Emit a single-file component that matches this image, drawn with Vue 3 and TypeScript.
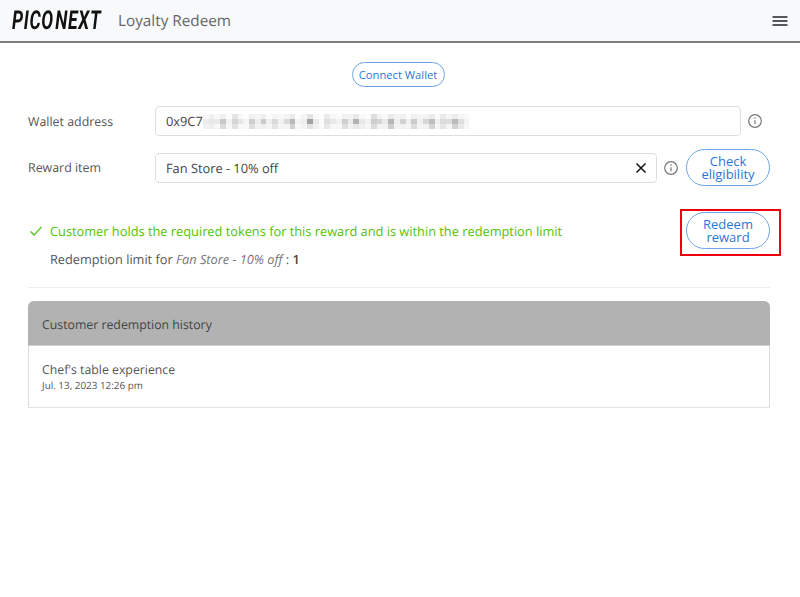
<script setup lang="ts">
const base: number[] = [
  0.18, 0.28, 0.14, 0.42, 0.12, 0.5, 0.16, 0.08, 0.46, 0.2, 0.34, 0.12, 0.36, 0.16, 0.24, 0.55, 0.1, 0.2,
  0.6, 0.16, 0.05, 0.38, 0.14, 0.1, 0.44, 0.22, 0.5, 0.18, 0.12, 0.6, 0.28, 0.16, 0.68, 0.2, 0.3, 0.12,
  0.48, 0.18, 0.26, 0.5, 0.14, 0.42, 0.22, 0.52, 0.3, 0.14
]
const rowFactor: number[] = [0.35, 1, 0.55]
const blur: number[] = rowFactor.flatMap((f, r) =>
  base.map((v, i) => v * f * (0.55 + 0.45 * (((i * 7 + r * 5) % 4) / 3)))
)
</script>

<template>
  <div class="page">
    <header class="bar">
      <div class="brand">
        <span class="logo"><span>PICO</span><span class="logo-next">NEXT</span></span>
        <span class="title">Loyalty Redeem</span>
      </div>
      <svg class="menu" width="16" height="10" viewBox="0 0 16 10" aria-hidden="true">
        <path d="M0.5 1h15M0.5 5h15M0.5 9h15" stroke="#212529" stroke-width="1.6" fill="none" />
      </svg>
    </header>

    <main class="main">
      <div class="connect">
        <button class="pill small">Connect Wallet</button>
      </div>

      <div class="row address-row">
        <label class="label">Wallet address</label>
        <div class="input">
          <span>0x9C7</span>
          <span class="blur">
            <i v-for="(b, i) in blur" :key="i" :style="{ opacity: b }"></i>
          </span>
        </div>
        <svg class="info" width="16" height="16" viewBox="0 0 16 16" aria-hidden="true">
          <circle cx="8" cy="8" r="6.3" fill="none" stroke="#777" stroke-width="1.2" />
          <path d="M8 7.2v4" stroke="#777" stroke-width="1.2" />
          <circle cx="8" cy="5" r=".8" fill="#777" />
        </svg>
      </div>

      <div class="row reward-row">
        <label class="label">Reward item</label>
        <div class="input grow">
          <span>Fan Store - 10% off</span>
          <svg class="clear" width="12" height="12" viewBox="0 0 12 12" aria-hidden="true">
            <path d="M1.5 1.5l9 9M10.5 1.5l-9 9" stroke="#111" stroke-width="1.5" fill="none" />
          </svg>
        </div>
        <svg class="info" width="16" height="16" viewBox="0 0 16 16" aria-hidden="true">
          <circle cx="8" cy="8" r="6.3" fill="none" stroke="#777" stroke-width="1.2" />
          <path d="M8 7.2v4" stroke="#777" stroke-width="1.2" />
          <circle cx="8" cy="5" r=".8" fill="#777" />
        </svg>
        <button class="pill">Check eligibility</button>
      </div>

      <hr class="rule first" />

      <section class="status">
        <div class="status-text">
          <p class="ok">
            <svg width="14" height="12" viewBox="0 0 14 12" aria-hidden="true">
              <path d="M1.5 6.5l3.6 3.6 7.4-8.2" stroke="#52c41a" stroke-width="1.4" fill="none" />
            </svg>
            <span>Customer holds the required tokens for this reward and is within the redemption limit</span>
          </p>
          <p class="limit">Redemption limit for <em>Fan Store - 10% off</em> : <strong>1</strong></p>
        </div>
        <div class="redeem">
          <button class="pill">Redeem reward</button>
          <span class="mark"></span>
        </div>
      </section>

      <hr class="rule second" />

      <section class="card">
        <div class="card-head">Customer redemption history</div>
        <div class="card-item">
          <div class="item-name">Chef's table experience</div>
          <div class="item-date">Jul. 13, 2023 12:26 pm</div>
        </div>
      </section>
    </main>
  </div>
</template>

<style>
html, body { margin: 0; background: #fff; }
</style>

<style scoped>
.page {
  width: 800px;
  height: 597px;
  overflow: hidden;
  font-family: "Open Sans", sans-serif;
  font-size: 14px;
  color: #555;
  text-rendering: geometricPrecision;
}
.bar {
  box-sizing: border-box;
  height: 43px;
  background: #f8f9fa;
  border-bottom: 2px solid #7f7f7f;
  display: flex;
  align-items: center;
  justify-content: space-between;
  padding: 0 12px;
}
.brand { display: flex; align-items: center; }
.logo {
  width: 88px;
  display: inline-flex;
  gap: 2px;
  font-family: "Liberation Sans Narrow", "Roboto", sans-serif;
  font-style: italic;
  font-weight: 700;
  font-size: 26px;
  line-height: 24px;
  color: #111;
  transform: scaleX(.68);
  transform-origin: left center;
  letter-spacing: 1px;
  white-space: nowrap;
}
.title { margin-left: 18px; font-size: 15.3px; color: #666; }
.main { padding: 19px 30px 0 28px; }
.connect { display: flex; justify-content: center; padding-right: 2px; }
.pill {
  box-sizing: border-box;
  width: 84px;
  height: 37px;
  padding: 0 8px;
  border: 1px solid #6ea4e6;
  border-radius: 18.5px;
  background: #fff;
  color: #2a77d6;
  font: 13px/13px "Open Sans", sans-serif;
}
.pill.small {
  width: 93px;
  height: 25px;
  padding: 0;
  border-radius: 12.5px;
  font-size: 11.2px;
}
.row { display: flex; align-items: center; }
.address-row { margin-top: 19px; height: 30px; }
.reward-row { margin-top: 13px; height: 37px; }
.label { width: 127px; flex: none; font-size: 12.4px; }
.input {
  box-sizing: border-box;
  height: 30px;
  width: 586px;
  flex: none;
  border: 1px solid #dcdfe2;
  border-radius: 4px;
  padding: 0 10px;
  display: flex;
  align-items: center;
  font-size: 12.8px;
  color: #444;
}
.input.grow { width: 502px; justify-content: space-between; padding-right: 9px; }
.info { margin-left: 6px; flex: none; }
.reward-row .pill { margin-left: 7px; }
.blur {
  display: grid;
  grid-template-columns: repeat(46, 5.8px);
  grid-auto-rows: 5px;
  filter: blur(.7px);
}
.blur i { display: block; background: #666; }
.rule { border: 0; border-top: 1px solid #eceded; margin: 0; }
.rule.first { margin-top: 12px; visibility: hidden; }
.status {
  display: flex;
  justify-content: space-between;
  margin-top: 13px;
}
.status-text { padding-top: 10px; }
.ok { margin: 0; display: flex; align-items: center; color: #4fc308; font-size: 12.8px; line-height: 18px; }
.ok svg { margin: 0 7px 0 1px; flex: none; }
.limit { margin: 10px 0 0 22px; font-size: 12.75px; line-height: 18px; }
.limit em { color: #777; }
.limit strong { font-weight: 600; color: #444; }
.redeem { position: relative; height: 37px; }
.mark {
  position: absolute;
  left: -6px;
  top: -3px;
  right: -11px;
  bottom: -7px;
  border: 2px solid #f0000f;
  pointer-events: none;
}
.rule.second { margin-top: 19px; }
.card {
  margin-top: 13px;
  border: 1px solid #dedede;
  border-bottom: 0;
  border-radius: 6px 6px 0 0;
}
.card-head {
  margin: -1px -1px 0;
  height: 45px;
  background: #b2b2b2;
  border-bottom: 1px solid #d0d0d0;
  box-sizing: border-box;
  border-radius: 6px 6px 0 0;
  display: flex;
  align-items: center;
  padding: 2px 0 0 14px;
  font-size: 12.3px;
  color: #444;
}
.card-item {
  height: 62px;
  padding: 15px 13px 0;
  box-sizing: border-box;
  border-bottom: 1px solid #e4e4e4;
}
.item-name { font-size: 12.3px; line-height: 17px; }
.item-date { font-size: 9.9px; line-height: 15px; }
</style>
